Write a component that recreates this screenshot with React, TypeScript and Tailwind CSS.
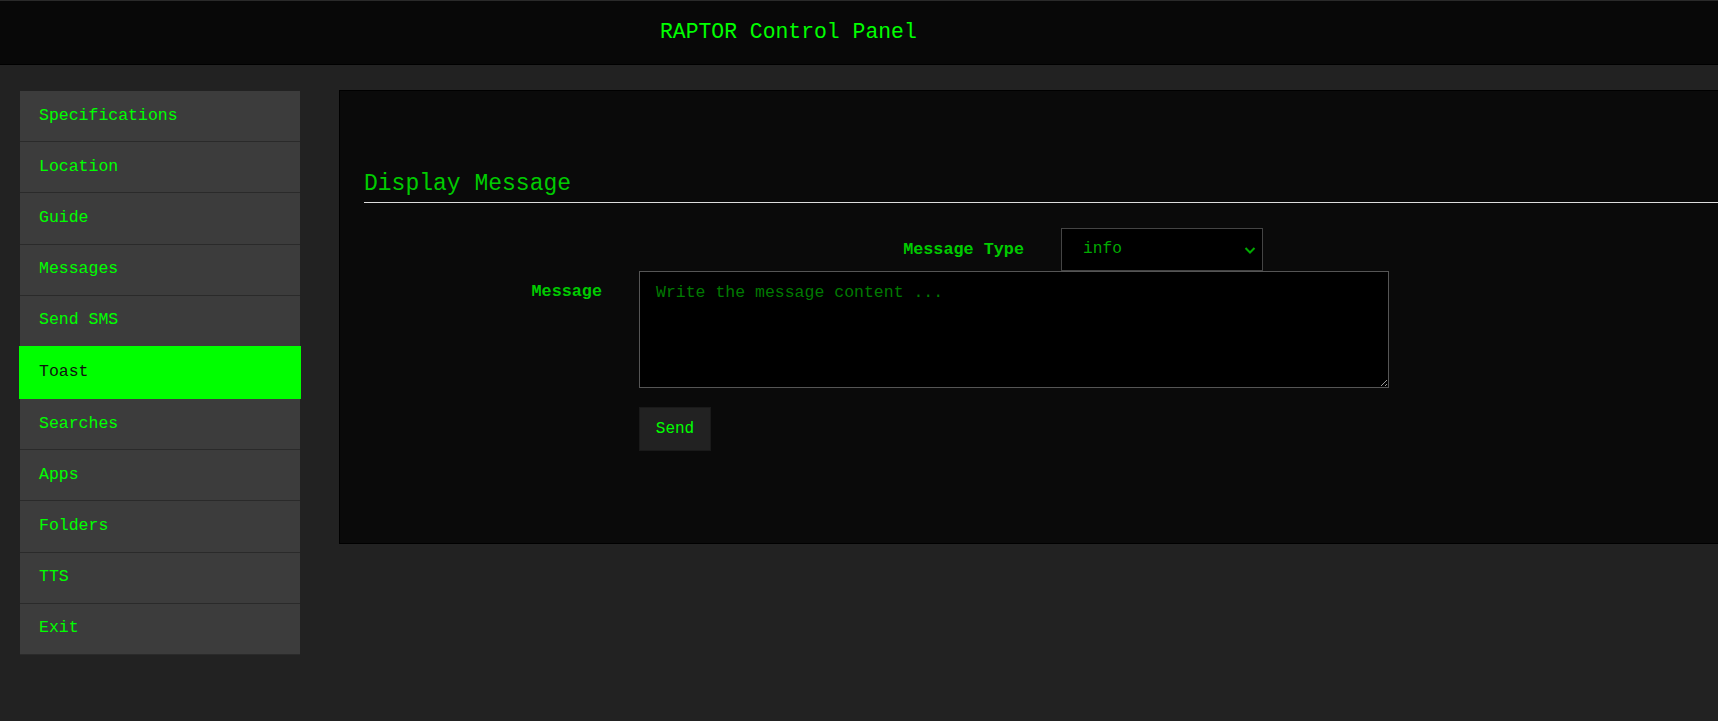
import { useState } from 'react';

const MENU = [
  'Specifications',
  'Location',
  'Guide',
  'Messages',
  'Send SMS',
  'Toast',
  'Searches',
  'Apps',
  'Folders',
  'TTS',
  'Exit',
];

const MONO = { fontFamily: '"Liberation Mono", "DejaVu Sans Mono", monospace' };

export default function App() {
  const [active, setActive] = useState('Toast');
  const [type, setType] = useState('info');

  return (
    <div className="w-[1718px] h-[721px] overflow-hidden bg-[#222222]" style={MONO}>
      {/* Header */}
      <header className="h-[65px] bg-[#080808] border-t border-[#2a2a2a] border-b border-b-black flex items-center pl-[660px]">
        <h1 className="text-[21.4px] text-[#00ff00] leading-none">RAPTOR Control Panel</h1>
      </header>

      <div className="flex items-start">
        {/* Sidebar */}
        <nav className="ml-5 mt-[26px] w-[280px] shrink-0 flex flex-col">
          {MENU.map((item) => {
            const on = item === active;
            return (
              <button
                key={item}
                onClick={() => setActive(item)}
                className={`h-[51.2px] text-left pl-[19px] text-[16.5px] border-b ${
                  on
                    ? 'bg-[#00ff00] text-[#111111] border-[#00ff00] -mx-px -mt-px h-[53px] pl-[20px] relative'
                    : 'bg-[#3c3c3c] text-[#00ff00] border-[#2a2a2a]'
                }`}
              >
                {item}
              </button>
            );
          })}
        </nav>

        {/* Main panel */}
        <main className="ml-[39px] mt-[25px] w-[1420px] shrink-0 bg-[#0a0a0a] border border-black pt-[79px] pb-[92px] pl-6">
          <h2 className="text-[23px] leading-[28px] text-[#00cc00] pb-1 border-b border-[#dddddd]">
            Display Message
          </h2>

          <div className="mt-[25px] flex items-center">
            <label className="w-[660px] text-right text-[16.8px] font-bold text-[#00cc00]">
              Message Type
            </label>
            <div className="ml-[37px] relative w-[202px] h-[43px] bg-black border border-[#444444]">
              <select
                value={type}
                onChange={(e) => setType(e.target.value)}
                className="appearance-none w-full h-full bg-transparent pl-[21px] text-[16.2px] text-[#00aa00] outline-none"
                style={MONO}
              >
                <option value="info">info</option>
                <option value="success">success</option>
                <option value="warning">warning</option>
                <option value="error">error</option>
              </select>
              <svg
                className="absolute right-[6px] top-[16px] pointer-events-none"
                width="12"
                height="10"
                viewBox="0 0 12 10"
                fill="none"
              >
                <path d="M1.5 3 L6 7.5 L10.5 3" stroke="#00aa00" strokeWidth="2" />
              </svg>
            </div>
          </div>

          <div className="flex items-start">
            <label className="w-[238px] text-right text-[16.8px] font-bold text-[#00cc00] pt-[8px]">
              Message
            </label>
            <textarea
              placeholder="Write the message content ..."
              className="ml-[37px] w-[750px] h-[117px] bg-black border border-[#555555] px-4 py-[9px] text-[16.5px] text-[#00cc00] placeholder:text-[#007a00] outline-none"
              style={MONO}
            />
          </div>

          <div className="mt-[19px] ml-[275px]">
            <button className="w-[72px] h-[44px] bg-[#222222] border border-[#1a1a1a] text-[16px] text-[#00ff00]">
              Send
            </button>
          </div>
        </main>
      </div>
    </div>
  );
}
